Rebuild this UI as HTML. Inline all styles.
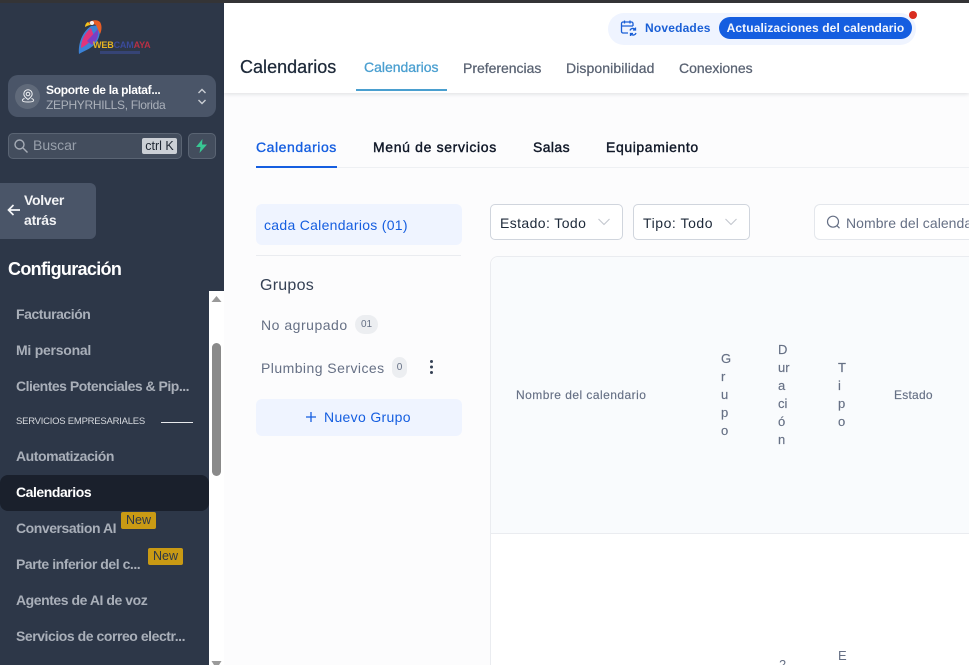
<!DOCTYPE html>
<html lang="es">
<head>
<meta charset="utf-8">
<title>Calendarios</title>
<style>
html,body{margin:0;padding:0;width:969px;height:665px;overflow:hidden;background:#fff;font-family:"Liberation Sans",sans-serif}
#p{position:relative;width:969px;height:665px;overflow:hidden;background:#fcfcfd}
.a{position:absolute;white-space:nowrap}
.t{position:absolute;white-space:nowrap;line-height:18px;height:18px}
.nav{color:#a9afb9;font-weight:700;font-size:14px;left:16px;letter-spacing:-.45px}
.v{color:#667085;font-size:13px;line-height:18.1px;white-space:normal;text-align:left;-webkit-text-stroke:.15px #667085}
svg{position:absolute;display:block}
</style>
</head>
<body>
<div id="p">
<!-- sidebar -->
<div class="a" style="left:0;top:0;width:224px;height:665px;background:#2d3748"></div>

<!-- logo -->
<svg style="left:76px;top:18px" width="80" height="38" viewBox="0 0 80 38">
<path d="M3 36C2 26 6 14 15 8l8-1c2 6 1 14-5 20-4 4-10 6-15 9z" fill="#3b82d6"/>
<path d="M5 30c0-8 4-15 10-20l3 8c-3 5-7 9-13 12z" fill="#e0357b"/>
<path d="M11 23l11-12c1 6-1 12-6 16z" fill="#7b3fc4"/>
<path d="M12 5c3-3 9-4 12-1 2 3 2 8 0 12l-4-9c-2-1-5-1-8-2z" fill="#e85d26"/>
<path d="M12 4c-2 1-3 3-3 5 2-1 4-2 6-2z" fill="#f6c21c"/>
<circle cx="16" cy="5" r="2" fill="#f4f4f4"/>
</svg>
<div class="a" style="left:93px;top:40px;font-size:9px;line-height:11px;font-weight:700;letter-spacing:-.15px;color:#e6b422">WEB<span style="color:#3a4a9a">CAM</span><span style="color:#b83045">AYA</span></div>
<div class="a" style="left:100px;top:51px;width:40px;height:3px;background:#3a4a8a;opacity:.7"></div>

<!-- location switcher -->
<div class="a" style="left:8px;top:75px;width:208px;height:42px;border-radius:10px;background:#4a5568"></div>
<div class="a" style="left:15px;top:84px;width:25px;height:25px;border-radius:50%;background:#606a7a"></div>
<svg style="left:20px;top:88px" width="16" height="16" viewBox="0 0 16 16" fill="none" stroke="#f1f3f5" stroke-width="1">
<circle cx="8" cy="6" r="1.800"/><path d="M8 11.500C6 10 3.800 8.300 3.800 6a4.200 4.200 0 0 1 8.400 0c0 2.300-2.200 4-4.200 5.500z"/><path d="M4.500 10.500c-1.500.5-2.500 1.200-2 2.300.4.800 2 1.200 5.500 1.200s5.100-.4 5.500-1.200c.5-1.100-.5-1.800-2-2.300"/>
</svg>
<div class="t" style="left:46px;top:81px;color:#fff;font-weight:700;font-size:12px;letter-spacing:-.3px">Soporte de la plataf...</div>
<div class="t" style="left:46px;top:96px;color:#aab0ba;font-size:12px;letter-spacing:-.3px">ZEPHYRHILLS, Florida</div>
<svg style="left:196px;top:87px" width="12" height="19" viewBox="0 0 12 19" fill="none" stroke="#c9cdd3" stroke-width="1.400">
<path d="M2.500 6L6 2.500 9.500 6M2.500 13L6 16.500 9.500 13"/>
</svg>

<!-- search -->
<div class="a" style="left:8px;top:133px;width:172px;height:24px;border:1px solid #5a6473;border-radius:5px;background:#434d5d"></div>
<svg style="left:13px;top:138px" width="16" height="16" viewBox="0 0 16 16" fill="none" stroke="#a6acb6" stroke-width="1.400">
<circle cx="6.500" cy="6.500" r="4.500"/><path d="M10 10l4.500 4.500"/>
</svg>
<div class="t" style="left:33px;top:136px;color:#98a0ab;font-size:14px">Buscar</div>
<div class="a" style="left:142px;top:138px;width:35px;height:16px;background:#ccd0d6;border-radius:2px;color:#1f2733;font-size:12.500px;line-height:16px;text-align:center">ctrl K</div>
<div class="a" style="left:188px;top:133px;width:26px;height:24px;border:1px solid #5a6473;border-radius:5px;background:#434d5d"></div>
<svg style="left:195px;top:139px" width="13" height="14" viewBox="0 0 13 14"><path d="M7.500 0L1 8h4.500L4.500 14 12 5.500H7z" fill="#38c793"/></svg>

<!-- back -->
<div class="a" style="left:0;top:183px;width:96px;height:56px;background:#4a5568;border-radius:0 6px 6px 0"></div>
<svg style="left:7px;top:203px" width="14" height="14" viewBox="0 0 14 14" fill="none" stroke="#f4f5f7" stroke-width="1.700"><path d="M13 7H1.500M6.500 2L1.500 7l5 5"/></svg>
<div class="t" style="left:24px;top:191px;color:#f2f3f5;font-weight:700;font-size:14px;letter-spacing:-.3px">Volver</div>
<div class="t" style="left:24px;top:211px;color:#f2f3f5;font-weight:700;font-size:14px;letter-spacing:-.2px">atrás</div>

<div class="t" style="left:8px;top:259px;color:#fff;font-weight:700;font-size:18px;letter-spacing:-.68px;line-height:20px;height:20px">Configuración</div>

<!-- nav -->
<div class="t nav" style="top:305px">Facturación</div>
<div class="t nav" style="top:341px;letter-spacing:-.25px">Mi personal</div>
<div class="t nav" style="top:377px;letter-spacing:-.5px">Clientes Potenciales &amp; Pip...</div>
<div class="t" style="left:16px;top:413px;color:#d6d9de;font-size:9.500px;letter-spacing:-.24px">SERVICIOS EMPRESARIALES</div>
<div class="a" style="left:161px;top:422px;width:32px;height:1px;background:#e8eaed"></div>
<div class="t nav" style="top:447px">Automatización</div>
<div class="a" style="left:0;top:475px;width:209px;height:36px;background:#1a202c;border-radius:8px"></div>
<div class="t nav" style="top:483px;color:#fff">Calendarios</div>
<div class="t nav" style="top:519px">Conversation AI</div>
<div class="a" style="left:121px;top:512px;width:35px;height:17px;background:#c99a14;border-radius:2px;color:#2d3748;font-size:12.500px;line-height:17px;text-align:center">New</div>
<div class="t nav" style="top:555px">Parte inferior del c...</div>
<div class="a" style="left:148px;top:548px;width:35px;height:17px;background:#c99a14;border-radius:2px;color:#2d3748;font-size:12.500px;line-height:17px;text-align:center">New</div>
<div class="t nav" style="top:591px">Agentes de AI de voz</div>
<div class="t nav" style="top:627px">Servicios de correo electr...</div>

<!-- scrollbar -->
<div class="a" style="left:209px;top:291px;width:15px;height:374px;background:#fff"></div>
<div class="a" style="left:212px;top:343px;width:9px;height:133px;background:#8a8a8a;border-radius:5px"></div>
<svg style="left:211px;top:296px" width="11" height="6" viewBox="0 0 11 6"><path d="M5.500 0L10.500 6H.5z" fill="#9a9a9a"/></svg>
<svg style="left:211px;top:661px" width="11" height="4" viewBox="0 0 11 4"><path d="M.5 0h10L8 4H3z" fill="#9a9a9a"/></svg>

<!-- header -->
<div class="a" style="left:224px;top:0;width:745px;height:93px;background:#fff;box-shadow:0 1px 4px rgba(16,24,40,.13)"></div>
<div class="a" style="left:0;top:0;width:969px;height:3px;background:#343436"></div>

<div class="a" style="left:608px;top:13px;width:308px;height:32px;background:#eff4ff;border-radius:16px"></div>
<svg style="left:620px;top:20px" width="18" height="17" viewBox="0 0 18 17" fill="none" stroke="#1a5fd6" stroke-width="1.300">
<path d="M8 13H3a1.500 1.500 0 0 1-1.500-1.500v-8A1.500 1.500 0 0 1 3 2h8.500A1.500 1.500 0 0 1 13 3.500V6M1.500 6H13M4.500 .5v3M10 .5v3"/>
<path d="M10 10.500a3 3 0 0 1 5.500-.5M16 13a3 3 0 0 1-5.500.5M15.500 7.500V10H13M10.500 16v-2.500H13"/>
</svg>
<div class="t" style="left:645px;top:19px;font-weight:700;font-size:12px;letter-spacing:.18px;color:#1a5fd6">Novedades</div>
<div class="a" style="left:719px;top:17px;width:193px;height:22px;background:#155ee0;border-radius:11px;color:#f3f6fd;font-weight:700;font-size:12px;line-height:22px;text-align:center;letter-spacing:.1px">Actualizaciones del calendario</div>
<div class="a" style="left:909px;top:11px;width:8px;height:8px;background:#d92d20;border-radius:50%"></div>

<div class="t" style="left:240px;top:57px;color:#1d2939;font-size:18px;line-height:21px;height:21px;letter-spacing:.02px;font-weight:400;-webkit-text-stroke:.25px #1d2939">Calendarios</div>
<div class="t" style="left:364px;top:58px;color:#4a9fd0;font-weight:400;font-size:14px;-webkit-text-stroke:.3px #4a9fd0;letter-spacing:-.02px">Calendarios</div>
<div class="a" style="left:356px;top:89px;width:91px;height:2px;background:#4a9fcf"></div>
<div class="t" style="left:463px;top:59px;color:#596272;font-size:14px;-webkit-text-stroke:.25px #596272;letter-spacing:-.02px">Preferencias</div>
<div class="t" style="left:566px;top:59px;color:#596272;font-size:14px;-webkit-text-stroke:.25px #596272;letter-spacing:.1px">Disponibilidad</div>
<div class="t" style="left:679px;top:59px;color:#596272;font-size:14px;-webkit-text-stroke:.25px #596272;letter-spacing:-.03px">Conexiones</div>

<!-- sub tabs -->
<div class="a" style="left:256px;top:167px;width:713px;height:1px;background:#eef0f3"></div>
<div class="a" style="left:256px;top:166px;width:81px;height:2px;background:#155ee0"></div>
<div class="t" style="left:256px;top:138px;color:#155ee0;font-size:14px;-webkit-text-stroke:.35px #155ee0;letter-spacing:.56px">Calendarios</div>
<div class="t" style="left:373px;top:138px;color:#101828;font-size:14px;-webkit-text-stroke:.4px #101828;letter-spacing:.65px">Menú de servicios</div>
<div class="t" style="left:533px;top:138px;color:#101828;font-size:14px;-webkit-text-stroke:.4px #101828;letter-spacing:.4px">Salas</div>
<div class="t" style="left:606px;top:138px;color:#101828;font-size:14px;-webkit-text-stroke:.4px #101828;letter-spacing:.6px">Equipamiento</div>

<!-- left panel -->
<div class="a" style="left:256px;top:204px;width:206px;height:41px;background:#eff4ff;border-radius:6px"></div>
<div class="t" style="left:264px;top:216px;color:#155ee0;font-size:14px;letter-spacing:.29px">cada Calendarios (01)</div>
<div class="a" style="left:256px;top:255px;width:205px;height:1px;background:#eaecf0"></div>
<div class="t" style="left:260px;top:277px;color:#344054;font-size:16px;letter-spacing:.25px">Grupos</div>
<div class="t" style="left:261px;top:316px;color:#667085;font-size:14px;letter-spacing:.52px">No agrupado</div>
<div class="a" style="left:355px;top:315px;width:23px;height:19px;background:#eceef1;border-radius:10px;color:#667085;font-size:10px;line-height:19px;text-align:center">01</div>
<div class="t" style="left:261px;top:359px;color:#667085;font-size:14px;letter-spacing:.45px">Plumbing Services</div>
<div class="a" style="left:392px;top:357px;width:15px;height:21px;background:#eceef1;border-radius:8px;color:#667085;font-size:10px;line-height:21px;text-align:center">0</div>
<svg style="left:429px;top:359px" width="5" height="16" viewBox="0 0 5 16" fill="#344054"><circle cx="2.500" cy="2.500" r="1.500"/><circle cx="2.500" cy="8" r="1.500"/><circle cx="2.500" cy="13.500" r="1.500"/></svg>
<div class="a" style="left:256px;top:399px;width:206px;height:37px;background:#eff4ff;border-radius:6px"></div>
<svg style="left:305px;top:411px" width="12" height="12" viewBox="0 0 12 12" fill="none" stroke="#155ee0" stroke-width="1.300"><path d="M6 1v10M1 6h10"/></svg>
<div class="t" style="left:324px;top:408px;color:#155ee0;font-size:14px;letter-spacing:.33px">Nuevo Grupo</div>

<!-- filters -->
<div class="a" style="left:490px;top:204px;width:131px;height:34px;background:#fff;border:1px solid #d0d5dd;border-radius:5px"></div>
<div class="t" style="left:500px;top:214px;color:#1d2939;font-size:14px;letter-spacing:.4px">Estado: Todo</div>
<svg style="left:597px;top:218px" width="14" height="8" viewBox="0 0 14 8" fill="none" stroke="#c3c7ce" stroke-width="1.100"><path d="M1.500 1L7 6.500 12.500 1"/></svg>
<div class="a" style="left:633px;top:204px;width:115px;height:34px;background:#fff;border:1px solid #d0d5dd;border-radius:5px"></div>
<div class="t" style="left:643px;top:214px;color:#1d2939;font-size:14px;letter-spacing:.55px">Tipo: Todo</div>
<svg style="left:724px;top:218px" width="14" height="8" viewBox="0 0 14 8" fill="none" stroke="#c3c7ce" stroke-width="1.100"><path d="M1.500 1L7 6.500 12.500 1"/></svg>
<div class="a" style="left:814px;top:204px;width:170px;height:34px;background:#fff;border:1px solid #e4e7ec;border-radius:6px"></div>
<svg style="left:826px;top:215px" width="15" height="15" viewBox="0 0 15 15" fill="none" stroke="#667085" stroke-width="1.200"><circle cx="7" cy="6.700" r="5.500"/><path d="M11 10.700l2.500 2.500"/></svg>
<div class="t" style="left:846px;top:214px;color:#667085;font-size:14px;letter-spacing:.05px">Nombre del calendario</div>

<!-- table -->
<div class="a" style="left:490px;top:256px;width:490px;height:420px;background:#fff;border:1px solid #eaecf0;border-radius:8px;box-sizing:border-box"></div>
<div class="a" style="left:491px;top:257px;width:478px;height:276px;background:#f9fbfd;border-radius:8px 0 0 0"></div>
<div class="a" style="left:491px;top:533px;width:478px;height:1px;background:#eaecf0"></div>
<div class="t" style="left:516px;top:386px;color:#667085;font-size:12px;letter-spacing:.46px;-webkit-text-stroke:.15px #667085">Nombre del calendario</div>
<div class="a v" style="left:721px;top:350px;width:12px">G<br>r<br>u<br>p<br>o</div>
<div class="a v" style="left:778px;top:341px;width:14px">D<br>ur<br>a<br>ci<br>ó<br>n</div>
<div class="a v" style="left:838px;top:359px;width:12px">T<br>i<br>p<br>o</div>
<div class="t" style="left:894px;top:386px;color:#667085;font-size:12px;letter-spacing:.24px;-webkit-text-stroke:.15px #667085">Estado</div>
<div class="t" style="left:779px;top:656px;color:#667085;font-size:13px">2</div>
<div class="t" style="left:838px;top:647px;color:#667085;font-size:13px">E</div>
</div>
</body>
</html>
